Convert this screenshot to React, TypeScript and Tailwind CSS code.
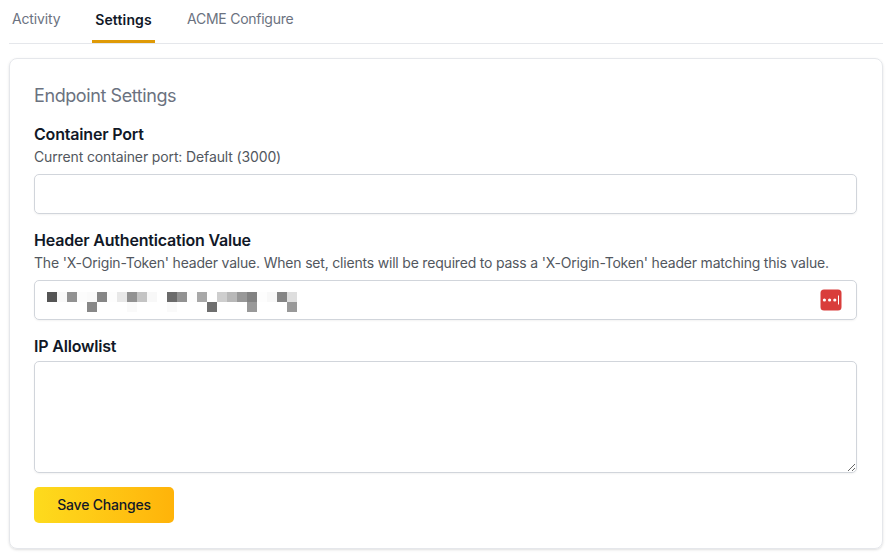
import React from "react";

const maskTop = [
  "#555555", "#f9f9f9", "#929292", "#fcfcfc", "#fafafa", "#868686", "#fdfdfd", "#e8e8e8", "#929292",
  "#c4c4c4", "#f8f8f8", "#ffffff", "#6b6b6b", "#929292", "#fdfdfd", "#a8a8a8", "#ffffff", "#cecece",
  "#b8b8b8", "#989898", "#828282", "#fdfdfd", "#f8f8f8", "#858585", "#dedede",
];

const maskBottom: Record<number, string> = {
  4: "#888888",
  8: "#fafafa",
  12: "#fafafa",
  16: "#6f6f6f",
  20: "#999999",
  24: "#999999",
};

function MaskedValue() {
  return (
    <div className="grid w-[250px] grid-cols-[repeat(25,10px)]" aria-label="Hidden value">
      {maskTop.map((color, i) => (
        <span key={i} className="h-2.5" style={{ backgroundColor: color }} />
      ))}
      {maskTop.map((_, i) => (
        <span key={i} className="h-2.5" style={{ backgroundColor: maskBottom[i] ?? "#ffffff" }} />
      ))}
    </div>
  );
}

function PasswordIcon() {
  return (
    <svg width="22" height="22" viewBox="0 0 22 22" aria-hidden="true">
      <rect x="0.5" y="0.5" width="21" height="21" rx="3.5" fill="#d93d3b" />
      <circle cx="4.4" cy="11" r="1.6" fill="#fff" />
      <circle cx="9.6" cy="11" r="1.6" fill="#fff" />
      <circle cx="14.8" cy="11" r="1.6" fill="#fff" />
      <rect x="18" y="6.5" width="1" height="9" fill="#fff" />
    </svg>
  );
}

function Label({ children }: { children: React.ReactNode }) {
  return (
    <h3 className="text-base leading-6 font-semibold tracking-[-0.19px] text-[#111827]">{children}</h3>
  );
}

function Hint({ children, className }: { children: React.ReactNode; className: string }) {
  return <p className={`mb-1.5 text-sm leading-[22px] whitespace-nowrap text-[#52575e] ${className}`}>{children}</p>;
}

export default function App() {
  return (
    <div className="h-[555px] overflow-hidden bg-white pr-[6px] pl-[9px] font-['Inter',sans-serif]">
      <nav className="flex h-11 items-start border-b border-[#e5e7eb] text-sm leading-5 text-[#6b7280]">
        <a className="mt-[9px] ml-[3px] w-[80px] tracking-[-0.15px]">Activity</a>
        <a className="h-[43px] w-[63px] border-b-[3px] border-[#df9a06] pt-[10px] text-center font-semibold tracking-[0.15px] text-[#111827]">
          Settings
        </a>
        <a className="mt-[9px] ml-[32px] tracking-[-0.25px]">ACME Configure</a>
      </nav>
      <main className="mt-[14px] h-[491px] rounded-lg border border-[#e5e7eb] px-6 pt-[23px] shadow-sm">
        <h2 className="mb-3 text-lg leading-7 tracking-[-0.41px] text-[#6b7280]">Endpoint Settings</h2>
        <Label>Container Port</Label>
        <Hint className="tracking-[-0.13px]">Current container port: Default (3000)</Hint>
        <input className="block h-10 w-[823px] rounded-[5px] border border-[#d1d5db] px-3 shadow-xs" />
        <div className="mt-[14px]">
          <Label>Header Authentication Value</Label>
          <Hint className="tracking-[-0.195px]">
            The 'X-Origin-Token' header value. When set, clients will be required to pass a 'X-Origin-Token' header
            matching this value.
          </Hint>
          <div className="flex h-10 w-[823px] items-center justify-between rounded-[5px] border border-[#d1d5db] pr-[14px] pl-3 shadow-xs">
            <div className="pt-1">
              <MaskedValue />
            </div>
            <PasswordIcon />
          </div>
        </div>
        <div className="mt-[14px]">
          <Label>IP Allowlist</Label>
          <textarea className="mt-[3px] block h-[112px] w-[823px] resize rounded-[5px] border border-[#d1d5db] px-3 py-2 shadow-xs" />
        </div>
        <button className="mt-[14px] h-9 w-[140px] rounded-[5px] border border-transparent bg-linear-to-r from-[#fddb1d] to-[#ffb309] bg-origin-border text-sm font-medium tracking-[-0.2px] text-[#111827]">
          Save Changes
        </button>
      </main>
    </div>
  );
}
